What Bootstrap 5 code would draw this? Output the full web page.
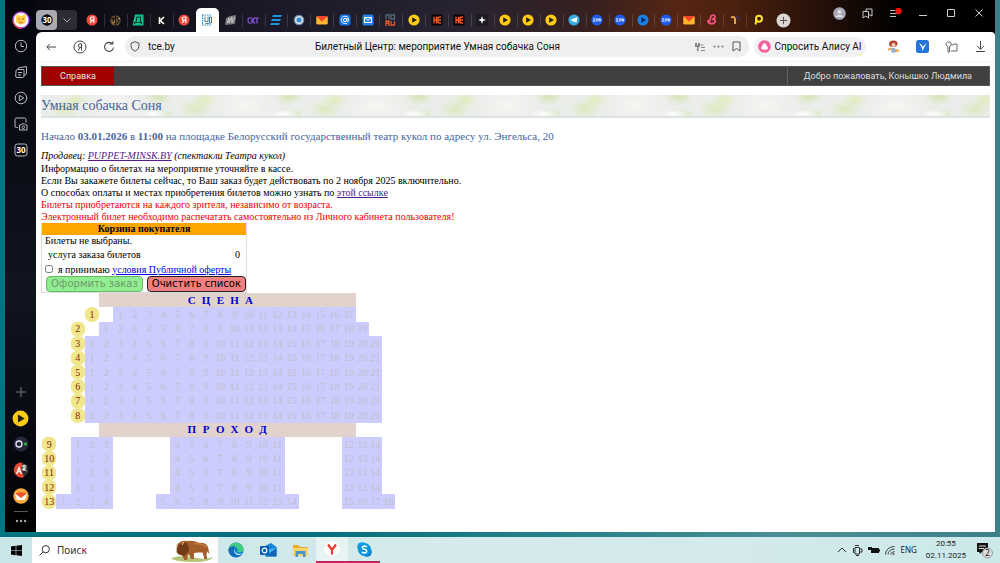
<!DOCTYPE html>
<html lang="ru">
<head>
<meta charset="utf-8">
<meta name="viewport" content="width=device-width, initial-scale=1">
<title>Билетный Центр: мероприятие Умная собачка Соня</title>
<link rel="stylesheet" href="https://cdn.jsdelivr.net/npm/bootstrap@5.3.0/dist/css/bootstrap.min.css">
<style>
body{background:linear-gradient(90deg,#007480,#02707c 30%,#4b8f95 80%,#3b8088);font-family:"Noto Sans",sans-serif;font-size:10px;line-height:12px;color:#111}
button{font:inherit}
svg{display:block;flex:none}
.desk{padding:0 5px 5px}
.side{width:31px;background:linear-gradient(#05060d,#10141f 55%,#070910 85%,#000);padding-top:7px;padding-bottom:4px}
.side button,.tb button,.tool button,.task button{border:0;background:none;padding:0;display:flex;align-items:center;justify-content:center;color:inherit;flex:none}
.side button{height:26px;width:31px;color:#b9bcc4}
.side .more{height:14px}
.side hr{width:14px;margin:2px auto 2px;color:#aaa;opacity:.5}
.frame{background:linear-gradient(90deg,#080912,#1c1a28 25%,#282330 45%,#37201f 58%,#572613 67%,#4a200f 73%,#1b0c06 84%,#000 90%) top/100% 40px no-repeat}
.tb{height:32px;color:#c9c9c9}
.grp{height:20px;margin-top:10px;width:41px;border-radius:4px;background:#2b2c34;overflow:hidden;margin-right:4px;flex:none}
.grp button:first-child{width:21px;background:#aaabb0;border-radius:4px}
.grp button:last-child{width:20px}
.tabs button{flex:1 1 0;height:22px;margin-top:9px;position:relative}
.tabs button+button:before{content:"";position:absolute;left:0;top:5px;height:13px;border-left:1px solid #ffffff22}
.tabs .on{background:#fff;border-radius:5px 5px 0 0;height:24px;margin-top:8px}
.tabs .on:before,.tabs .on+button:before{display:none}
.add{width:28px;height:22px;margin:9px 28px 0 0}
.win{padding-right:2px}
.win button{width:28px;height:26px}
.view{background:#fff;border-radius:6px 4px 0 0}
.tool{height:30px;color:#444;border-bottom:1px solid #f4f4f4;font-family:Roboto,"Noto Sans",sans-serif}
.tool>button{width:29px;height:28px}
.addr{height:21px;background:#efefef;border-radius:10px;color:#111;padding:0 4px 0 5px;margin:0 5px 0 2px}
.addr input{border:0;background:none;padding:0;width:36px;color:#111;outline:0}
.addr button{width:18px}
.tool .alice{height:20px;width:112px;border-radius:10px;background:#f1f0f2;color:#111;gap:3px;margin-right:13px}
.site{font-family:"Liberation Serif",serif;font-size:10px;color:#000;padding:4px 5px 20px}
.menu{background:#404040;border:1px solid #555;height:20px;font-family:Roboto,"Noto Sans",sans-serif;font-size:9px;color:#ddd}
.menu a{color:#e6e6e6;background:#a00000;width:72px}
.menu span{border-left:1px solid #606060;padding:0 17px 0 16px}
.banner{margin:9px 0 0;height:23px;line-height:22px;font-size:14px;font-weight:400;color:#46649b;border-bottom:2px solid #dde3e3;
background:radial-gradient(ellipse 14px 4px at 113px 19px,#fff,transparent),radial-gradient(ellipse 16px 10px at 24px 14px,#dce9be,transparent),radial-gradient(ellipse 14px 8px at 118px 2px,#d6e4b4,transparent),radial-gradient(ellipse 20px 8px at 128px 20px,#dfebcd,transparent),radial-gradient(ellipse 12px 8px at 34px 5px,#e2ecbc,transparent),radial-gradient(ellipse 34px 22px at 75px 10px,#f5f5f3,transparent),#ebedea;background-size:130px 23px}
.start{margin:10px 0 5px;font-size:11px;line-height:16px;font-weight:400;color:#46649b}
.site p{margin:0;line-height:12px}
.site p.org{line-height:13px}
.red{color:#e00}
.site a.vis{color:#551a8b}
.site a.lnk{color:#00e}
.cart{width:206px;border:1px solid #ddd;border-top:0}
.cart h2{background:orange;font-size:10px;line-height:12px;font-weight:700;margin:0;text-align:center}
.cart p{padding:0 3px}
.cart .fee{line-height:16px;padding:0 6px}
.cart input{width:8px;height:8px;margin:0 5px 2px 3px}
.cart .row3{height:13px;white-space:nowrap}
.cart button{font:10px/12px "DejaVu Sans",sans-serif;height:16px;padding:0 4px;border-radius:4px;flex:none}
.order{background:#90ee90;border:1px solid #67b767;color:#6f9a6f}
.clear{background:#f08080;border:1px solid #222;color:#000}
.hall{table-layout:fixed;width:353px;height:216px;margin-left:1px;border-collapse:collapse;text-align:center;font-size:10px;line-height:13px}
.hall td{padding:0;height:14px;font-weight:400;white-space:nowrap}
.hall col.slim{width:13px}
.hall .seat{background:#ccf;color:#bfc0c8}
.hall .bar{background:#e1d3cc;color:#00c;font-weight:700;font-size:11px}
.hall .num{color:#8b2500;background:radial-gradient(circle at center,#f0e68c 6px,#f0e68c 7px,transparent 8px)}
.task{height:26px;background:linear-gradient(90deg,#c9e5e7,#d4eaeb 40%,#d3e9eb 75%,#cce9ea);color:#222;font-size:8px;line-height:12px}
.task .go{width:32px;height:26px}
.find{width:186px;background:#fff;height:26px;padding:0 4px 0 7px;gap:7px}
.find input{border:0;padding:0;width:90px;outline:0;font-size:10px;background:none;color:#333}
.find input::placeholder{color:#333;opacity:1}
.apps{padding-left:2px}
.apps button{width:32px;height:26px}
.apps .run{border-bottom:2px solid #c2255c}
.apps .cur{background:#e8f3f4}
.tray{gap:4px;padding-right:7px}
.tray time{font-family:Roboto,"Noto Sans",sans-serif;text-align:center;margin:0 6px 0 5px}
</style>
</head>
<body class="min-vh-100 d-flex flex-column">
<svg width="0" height="0" class="position-absolute" aria-hidden="true"><defs>
<symbol id="ya" viewBox="0 0 12 12"><circle cx="6" cy="6" r="5.5" fill="#f0483c"/><path d="M7.8 9V3H6.2Q4.3 3 4.3 4.7T6.2 6.4H7.8M6 6.4 4.3 9" fill="none" stroke="#fff" stroke-width="1.2"/></symbol>
<symbol id="pl" viewBox="0 0 12 12"><circle cx="6" cy="6" r="5.6" fill="#fc1"/><path d="M4.2 3.2 9 6 4.2 8.8z" fill="#221c20"/></symbol>
<symbol id="zm" viewBox="0 0 12 12"><circle cx="6" cy="6" r="5.6" fill="#1e5be6"/><path d="M2 4.8H4.3L2 7.2H4.6M5.6 7.5V5H7V7.5M7 5H9.6V7.5M8.4 5V7.5" fill="none" stroke="#dce8ff" stroke-width=".9"/></symbol>
<symbol id="ml" viewBox="0 0 12 12"><rect x=".5" y="2" width="11" height="8.5" rx="1" fill="#ffac1c"/><path d="M.5 2H11.5L6 7.8z" fill="#f1442c"/><path d="M.5 3 6 8 11.5 3V10H.5z" fill="#ffb52e"/></symbol>
<symbol id="he" viewBox="0 0 12 12"><rect x=".5" y=".5" width="11" height="11" rx="1" fill="#0b0707"/><path d="M3 2.7V9.4M3 6H5.5M5.5 2.7V9.4M7 3.5 10 2.8M7 6H10M7 8.5 10 9.3M7 3V9" fill="none" stroke="#f26522" stroke-width="1.3"/></symbol>
</defs></svg>

<div class="desk flex-grow-1 d-flex">
<nav class="side d-flex flex-column" aria-label="Боковая панель">
<button aria-label="Профиль"><svg width="18" height="18" viewBox="0 0 18 18"><circle cx="9" cy="9" r="8" fill="#fff" stroke="#a943d8" stroke-width="1.3"/><path d="M1 9A8 8 0 0 0 9 17" stroke="#e84b5b" fill="none" stroke-width="1.4"/><path d="M4 6 5 3 8 5H10L13 3 14 6V11Q9 16 4 11z" fill="#ffd147"/><circle cx="7" cy="8" r=".8" fill="#963"/><circle cx="11" cy="8" r=".8" fill="#963"/><path d="M7 11Q9 13 11 11" stroke="#d55" fill="none"/></svg></button>
<button aria-label="История"><svg width="14" height="14" viewBox="0 0 14 14" fill="none" stroke="currentColor"><circle cx="7" cy="7" r="5.7"/><path d="M7 3.5V7.5H10"/></svg></button>
<button aria-label="Вкладки"><svg width="14" height="14" viewBox="0 0 14 14" fill="none" stroke="currentColor"><path d="M2 6Q2 4.5 3.5 4.5H9Q10 4.5 10 5.5V11Q10 12.5 8.5 12.5H3Q1.5 12.5 1.7 11zM4 4 4.5 2.8 12.5 1.5V9L10 10.5M4 7.5H8M4 10H7"/></svg></button>
<button aria-label="Видео"><svg width="14" height="14" viewBox="0 0 14 14" fill="none" stroke="currentColor"><circle cx="7" cy="7" r="5.8"/><path d="M5.3 4.3 9.8 7 5.3 9.7z"/></svg></button>
<button aria-label="Скриншот"><svg width="14" height="14" viewBox="0 0 14 14" fill="none" stroke="currentColor"><path d="M4 10.5H2.5Q1 10.5 1 9V2.5Q1 1 2.500 1H10.500Q12 1 12 2.500V5.500M5.500 8H7L8 6.800H10.500L11.500 8H13V13H5.500z"/><circle cx="9.300" cy="10.300" r="1.300"/></svg></button>
<button aria-label="Счётчик"><svg width="14" height="14" viewBox="0 0 14 14"><rect x="1" y="1" width="12" height="12" rx="2.500" fill="none" stroke="currentColor"/><text x="7" y="10" text-anchor="middle" font-size="8" font-weight="700" fill="#fff">30</text></svg></button>
<button class="mt-auto" aria-label="Добавить"><svg width="12" height="12" viewBox="0 0 12 12" stroke="#777b85"><path d="M6 1V11M1 6H11"/></svg></button>
<button aria-label="Музыка"><svg width="17" height="17"><use href="#pl"/></svg></button>
<button aria-label="Алиса"><svg width="16" height="16" viewBox="0 0 16 16"><circle cx="8" cy="8" r="7.500" fill="#24283a"/><circle cx="6" cy="8" r="3" fill="none" stroke="#e8e9f3" stroke-width="1.300"/><circle cx="12.500" cy="8" r="1.400" fill="#2ecc40"/></svg></button>
<button aria-label="Переводчик"><svg width="16" height="16" viewBox="0 0 16 16"><circle cx="8" cy="8" r="7.500" fill="#2a2a2a"/><path d="M9 .500A7.500 7.500 0 1 0 11 15L8.500 8z" fill="#f0442f"/><path d="M3.500 12 6 5.500 8.500 12M4.500 9.700H7.500" fill="none" stroke="#fff" stroke-width="1.300"/><path d="M8.500 4H13.500M11 2.500V9M9 8Q13 7 13 5M9.500 6 13.500 9" fill="none" stroke="#fff"/></svg></button>
<button aria-label="Почта"><svg width="16" height="16" viewBox="0 0 16 16"><circle cx="8" cy="8" r="7.700" fill="#fdab3d"/><path d="M2 5.500H14L12 12H4z" fill="#fff"/><path d="M2 5.500Q8 2.500 14 5.500L8 10z" fill="#f2552c"/></svg></button>
<hr>
<button class="more" aria-label="Ещё"><svg width="12" height="4" fill="#aaa"><circle cx="2" cy="2" r="1.200"/><circle cx="6" cy="2" r="1.200"/><circle cx="10" cy="2" r="1.200"/></svg></button>
</nav>

<div class="frame flex-grow-1 d-flex flex-column">
<header class="tb d-flex">
<div class="grp d-flex"><button aria-label="Группа"><svg width="12" height="12" viewBox="0 0 12 12"><circle cx="6" cy="6" r="5.700" fill="#0b0b0b"/><text x="6" y="9" text-anchor="middle" font-size="8" font-weight="700" fill="#fff">30</text></svg></button><button aria-label="Список"><svg width="8" height="5" viewBox="0 0 8 5" fill="none" stroke="#aaa"><path d="M.500 .500 4 4 7.500 .500"/></svg></button></div>
<div class="tabs d-flex flex-grow-1">
<button aria-label="Яндекс"><svg width="12" height="12"><use href="#ya"/></svg></button>
<button aria-label="Сайт"><svg width="11" height="11" viewBox="0 0 11 11"><circle cx="5.500" cy="5.500" r="5.200" fill="#6d5236"/><path d="M5.500 0V11M1 4 4 3 3 7M7 2 9 6 7 9" stroke="#1a1510" fill="none" stroke-width="1.200"/><path d="M2 8 5 6M8 4 10 3" stroke="#d39a4a"/></svg></button>
<button aria-label="Дзен"><svg width="12" height="12" viewBox="0 0 12 12"><path d="M3 .500H11.500V11.500H.500z" fill="#10c28e"/><path d="M2.500 10V8.500H9.500V10M4 8.500 5 3H8.500V8.500" fill="none" stroke="#063b2c" stroke-width="1.200"/></svg></button>
<button aria-label="К"><svg width="11" height="11" viewBox="0 0 11 11"><rect width="11" height="11" rx="2" fill="#121212"/><path d="M3.500 2V9M8 2 4.300 5.500 8 9" fill="none" stroke="#fff" stroke-width="1.600"/></svg></button>
<button aria-label="Яндекс"><svg width="12" height="12"><use href="#ya"/></svg></button>
<button class="on" aria-label="Билетный Центр"><svg width="12" height="12" viewBox="0 0 12 12" fill="none" stroke="#2583b5"><path d="M1 1H11M1 11H11M1.500 1V11" stroke-dasharray="1.500 1"/><path d="M4 2.500V7.500H7V2.500M8.500 3H10.500V9H8.500zM4.500 9.500H8"/></svg></button>
<button aria-label="Сайт"><svg width="11" height="10" viewBox="0 0 11 10"><path d="M1 3 5 1 11 0 10 9 0 10z" fill="#777"/><path d="M2 8 4 3V8L7 2V8L10 2" stroke="#ccc" fill="none"/></svg></button>
<button aria-label="СКТ"><svg width="12" height="9" viewBox="0 0 12 9" fill="none" stroke="#8757d9" stroke-width="1.200"><path d="M4 2Q1 1 1 4.500T4 7M5 1.500V7.500M8 1.500 5.500 4.500 8 7.500M8 2H12M10 2V7.500"/></svg></button>
<button aria-label="Сайт"><svg width="12" height="10" viewBox="0 0 12 10"><path d="M3 0H12L11 2H2zM2 4H11L10 6H1zM1 8H10L9 10H0z" fill="#1d93dc"/></svg></button>
<button aria-label="Сайт"><svg width="12" height="12" viewBox="0 0 12 12"><circle cx="6" cy="6" r="4.700" fill="#d9e5ee" stroke="#668ca8" stroke-width="1.200"/><circle cx="6" cy="6" r="2.500" fill="#3488cc"/></svg></button>
<button aria-label="Почта"><svg width="12" height="12"><use href="#ml"/></svg></button>
<button aria-label="Mail"><svg width="12" height="12" viewBox="0 0 12 12"><rect x=".500" y=".500" width="11" height="11" rx="2.500" fill="#1671e8"/><path d="M8 4V6.500Q8 8 9.300 7.300 10.500 2.500 6 2.200 2 2.500 2.200 6.300 3 10.300 8 9.300" fill="none" stroke="#fff" stroke-width=".9"/><circle cx="6" cy="6" r="1.600" fill="none" stroke="#fff"/></svg></button>
<button aria-label="Письма"><svg width="12" height="12" viewBox="0 0 12 12"><rect x=".500" y=".500" width="11" height="11" rx="2" fill="#2580ee"/><path d="M2.500 3.500H9.500V8.500H2.500zM2.500 3.500 6 6.300 9.500 3.500" fill="none" stroke="#fff"/></svg></button>
<button aria-label="RU"><svg width="11" height="12" viewBox="0 0 11 12" fill="none" stroke-width="1.300"><path d="M1 5V1H4V5M6 1H9.500V5H6z" stroke="#536879"/><path d="M1 12V7H4V9H1M3 9 4.500 12M6 7V11H9.500V7" stroke="#e4592d"/></svg></button>
<button aria-label="Видео"><svg width="12" height="12"><use href="#pl"/></svg></button>
<button aria-label="НЕ"><svg width="12" height="12"><use href="#he"/></svg></button>
<button aria-label="НЕ"><svg width="12" height="12"><use href="#he"/></svg></button>
<button aria-label="Звезда"><svg width="12" height="12" viewBox="0 0 12 12"><rect width="12" height="12" rx="2" fill="#1b1a20"/><path d="M6 2 7 5 10 6 7 7 6 10 5 7 2 6 5 5z" fill="#fff"/></svg></button>
<button aria-label="Видео"><svg width="12" height="12"><use href="#pl"/></svg></button>
<button aria-label="Видео"><svg width="12" height="12"><use href="#pl"/></svg></button>
<button aria-label="Видео"><svg width="12" height="12"><use href="#pl"/></svg></button>
<button aria-label="Telegram"><svg width="12" height="12" viewBox="0 0 12 12"><circle cx="6" cy="6" r="5.600" fill="#34a9e0"/><path d="M2 6 9.500 3 8.300 9 5.500 7.300 5 8.500 4.300 6.700z" fill="#fff"/></svg></button>
<button aria-label="zm"><svg width="12" height="12"><use href="#zm"/></svg></button>
<button aria-label="zm"><svg width="12" height="12"><use href="#zm"/></svg></button>
<button aria-label="Плеер"><svg width="12" height="12" viewBox="0 0 12 12"><circle cx="6" cy="6" r="5.600" fill="#1780e6"/><path d="M4.300 3 9 6 4.300 9z" fill="#092c67"/></svg></button>
<button aria-label="zm"><svg width="12" height="12"><use href="#zm"/></svg></button>
<button aria-label="Почта"><svg width="12" height="12"><use href="#ml"/></svg></button>
<button aria-label="B"><svg width="12" height="12" viewBox="0 0 12 12"><path d="M3 10 5 2Q9 0 9 3 9 5 6 5.300 10 5 9 8 7 11 3 9 1 7 3 6" fill="none" stroke="#f0517e" stroke-width="1.800"/></svg></button>
<button aria-label="Сайт"><svg width="12" height="12" viewBox="0 0 12 12" fill="none" stroke-width="2"><path d="M2 3.500Q6 2 6 5V10" stroke="#e7a24a"/><path d="M6.500 2.500Q10 3 10 6" stroke="#35315b"/></svg></button>
<button aria-label="P"><svg width="12" height="12" viewBox="0 0 12 12"><circle cx="7" cy="4.800" r="3" fill="none" stroke="#ffe02d" stroke-width="2"/><path d="M4.500 5 3.500 10.500" stroke="#ffe02d" stroke-width="2"/></svg></button>
</div>
<button class="add" aria-label="Новая вкладка"><svg width="15" height="15" viewBox="0 0 15 15"><circle cx="7.500" cy="7.500" r="7" fill="#ddd6d3"/><path d="M7.500 3.800V11.200M3.800 7.500H11.200" stroke="#555"/></svg></button>
<div class="win d-flex">
<button aria-label="Пользователь"><svg width="13" height="13" viewBox="0 0 13 13"><circle cx="6.500" cy="6.500" r="6.300" fill="#a9a8b5"/><circle cx="6.500" cy="4.800" r="1.900" fill="#e4e3ec"/><path d="M2.500 10Q6.500 5.500 10.500 10" fill="#e4e3ec"/></svg></button>
<button aria-label="Коллекции"><svg width="11" height="11" viewBox="0 0 11 11" fill="none" stroke="currentColor"><path d="M1 3.500H6.500V10L3.800 8 1 10zM4 3V1H10V8L7 6.500"/></svg></button>
<button aria-label="Меню"><svg width="13" height="12" viewBox="0 0 13 12"><path d="M1 3.500H6M1 6.500H8M1 9.500H7" stroke="#bbb"/><circle cx="9.500" cy="4" r="3.200" fill="#f5140c"/></svg></button>
<button aria-label="Свернуть"><svg width="8" height="8" viewBox="0 0 8 8" stroke="#ccc"><path d="M0 6.500H8"/></svg></button>
<button aria-label="Развернуть"><svg width="8" height="8" viewBox="0 0 8 8" fill="none" stroke="#ccc"><path d="M.500 .500H7.500V7.500H.500z"/></svg></button>
<button aria-label="Закрыть"><svg width="8" height="8" viewBox="0 0 8 8" stroke="#ccc"><path d="M.500 .500 7.500 7.500M7.500 .500 .500 7.500"/></svg></button>
</div>
</header>

<div class="view flex-grow-1">
<div class="tool d-flex align-items-center">
<button aria-label="Назад"><svg width="10" height="8" viewBox="0 0 10 8" fill="none" stroke="currentColor"><path d="M10 4H1M4 .800 .800 4 4 7.200"/></svg></button>
<button aria-label="Яндекс"><svg width="14" height="14" viewBox="0 0 14 14" fill="none" stroke="currentColor"><circle cx="7" cy="7" r="6"/><path d="M8.500 10.500V3.800H7Q5.300 3.800 5.300 5.600T7 7.300H8.500M7 7.300 5.300 10.500"/></svg></button>
<button aria-label="Обновить"><svg width="12" height="12" viewBox="0 0 12 12" fill="none" stroke="currentColor" stroke-width="1.100"><path d="M9.500 3A4.500 4.500 0 1 0 10.500 6.500M6.500 3H9.800V.300"/></svg></button>
<div class="addr flex-grow-1 d-flex align-items-center">
<svg width="10" height="11" viewBox="0 0 10 11" fill="none" stroke="#555" class="me-2"><path d="M5 .700 9 2.300V5Q9 8.500 5 10.300 1 8.500 1 5V2.300z"/></svg>
<input aria-label="Адрес" value="tce.by">
<span class="flex-grow-1 text-center">Билетный Центр: мероприятие Умная собачка Соня</span>
<button aria-label="Перевод"><svg width="10" height="10" viewBox="0 0 10 10"><path d="M0 1H2V3H3V1H5V5H3.500V9H2V5H0z" fill="#888"/><path d="M5.500 3H8.500M6 5.500H10M6 8.500H10" stroke="#888" stroke-width="1.200"/></svg></button>
<button aria-label="Ещё"><svg width="11" height="3" fill="#777"><circle cx="1.500" cy="1.500" r="1"/><circle cx="5.500" cy="1.500" r="1"/><circle cx="9.500" cy="1.500" r="1"/></svg></button>
<button aria-label="Закладка"><svg width="9" height="11" viewBox="0 0 9 11" fill="none" stroke="#555"><path d="M1 1H8V10L4.500 7.500 1 10z"/></svg></button>
</div>
<button class="alice"><svg width="13" height="13" viewBox="0 0 13 13"><circle cx="6.500" cy="6.500" r="6.300" fill="#f2609d"/><path d="M6.500 3Q7.500 3 10 8 10 9.700 6.500 9.700T3 8Q5.500 3 6.500 3z" fill="#fff"/></svg>Спросить Алису AI</button>
<button aria-label="Расширение"><svg width="13" height="14" viewBox="0 0 13 14"><path d="M2 4Q2 .500 6.500 .500T10.500 4Q10 7 6 7T2 4" fill="#b5462e"/><circle cx="6.500" cy="5" r="2" fill="#f2ceb0"/><path d="M3 8H8L10 12 5 13z" fill="#9ab2ce"/><path d="M1 10 4 8M9 10 12 11" stroke="#e9a73c" stroke-width="2"/></svg></button>
<button aria-label="Расширение"><svg width="13" height="13" viewBox="0 0 13 13"><rect width="13" height="13" rx="2.500" fill="#2475d6"/><path d="M3 3 6 5 6.500 7 10.500 3 8 8 6 11 6 8z" fill="#fff"/></svg></button>
<button aria-label="Пароли"><svg width="13" height="12" viewBox="0 0 13 12" fill="none" stroke="#666"><path d="M3 11V6Q.500 4.500 1 2.500 2 .500 5 1 7 2 6 4L4.500 6V11zM6.500 4H8L9 3H12V10H6"/></svg></button>
<button aria-label="Загрузки"><svg width="9" height="11" viewBox="0 0 9 11" fill="none" stroke="currentColor"><path d="M4.500 0V8M1 4.800 4.500 8.300 8 4.800M0 10.500H9"/></svg></button>
</div>

<main class="site">
<nav class="menu d-flex justify-content-between align-items-stretch"><a href="#" class="d-flex align-items-center justify-content-center text-decoration-none">Справка</a><span class="d-flex align-items-center">Добро пожаловать, Конышко Людмила</span></nav>
<h1 class="banner">Умная собачка Соня</h1>
<h2 class="start">Начало <b>03.01.2026</b> в <b>11:00</b> на площадке Белорусский государственный театр кукол по адресу ул. Энгельса, 20</h2>
<p class="org fst-italic">Продавец: <a href="#" class="vis">PUPPET-MINSK.BY</a> (спектакли Театра кукол)</p>
<p class="org">Информацию о билетах на мероприятие уточняйте в кассе.</p>
<p>Если Вы закажете билеты сейчас, то Ваш заказ будет действовать по 2 ноября 2025 включительно.</p>
<p>О способах оплаты и местах приобретения билетов можно узнать по <a href="#" class="vis">этой ссылке</a></p>
<p class="red">Билеты приобретаются на каждого зрителя, независимо от возраста.</p>
<p class="red">Электронный билет необходимо распечатать самостоятельно из Личного кабинета пользователя!</p>
<form class="cart" onsubmit="return false">
<h2>Корзина покупателя</h2>
<p>Билеты не выбраны.</p>
<div class="fee d-flex justify-content-between align-items-center"><span>услуга заказа билетов</span><span>0</span></div>
<div class="row3 d-flex align-items-center"><input type="checkbox" id="agree"><label for="agree">я принимаю <a href="#" class="lnk">условия Публичной оферты</a></label></div>
<div class="d-flex justify-content-between ps-1"><button class="order" disabled>Оформить заказ</button><button class="clear">Очистить список</button></div>
</form>
<table class="hall" aria-label="Схема зала"><colgroup><col span="22"><col span="3" class="slim"></colgroup><tbody id="hall"></tbody></table>
</main>
</div>
</div>
</div>

<footer class="task d-flex align-items-center">
<button class="go" aria-label="Пуск"><svg width="11" height="11" viewBox="0 0 11 11"><path d="M0 1.500 4.700 .800V5.200H0zM5.300 .700 11 0V5.200H5.300zM0 5.800H4.700V10.200L0 9.500zM5.300 5.800H11V11L5.300 10.300z" fill="#000"/></svg></button>
<label class="find d-flex align-items-center"><svg width="11" height="11" viewBox="0 0 11 11" fill="none" stroke="#333"><circle cx="6.800" cy="4.200" r="3.600"/><path d="M4.200 6.800 .500 10.500"/></svg><input placeholder="Поиск" aria-label="Поиск">
<svg width="44" height="25" viewBox="0 0 46 26" class="ms-auto"><path d="M1 21Q12 17 24 20T45 20Q42 25 24 25T1 21" fill="#b5c47a"/><path d="M7 8Q10 2 18 3 25 2 30 5 38 4 40 10L41 17 39 14 38 17 39 22H36L34 15 28 15 25 16V22H22L20 17 18 19V23H15L13 18 9 17Q6 15 7 12z" fill="#a35e2b"/><path d="M8 8Q12 4 18 5L20 13 15 19 9 17Q6 14 8 8" fill="#743c16"/><path d="M8 9 6 6M13 7 14 4" stroke="#eee0bd"/><path d="M25 6Q34 5 38 10" stroke="#c0763c" fill="none" stroke-width="2"/></svg></label>
<div class="apps d-flex">
<button aria-label="Edge"><svg width="16" height="16" viewBox="0 0 16 16"><circle cx="8" cy="8" r="7.600" fill="#1480d0"/><path d="M.500 7Q2 .400 8.500 .400 15 1 15.600 7 15 11 10.500 10.500 8.500 10 10 8 9 4.500 5 5 2 5.500 .500 7" fill="#42cb82"/><path d="M.500 7Q3 3.500 7 4 4 8 6.500 12 9 15 13 13 9 17 4 14 .500 12 .500 7" fill="#116bb9"/><path d="M7 7Q6 12 12 12L14.500 11Q12 14 8.500 12.500 5 10 7 7" fill="#d6f0f1"/></svg></button>
<button aria-label="Outlook"><svg width="17" height="14" viewBox="0 0 17 14"><path d="M5 3 11 0 16.500 4V13H5z" fill="#1684d8"/><path d="M5 7 16.500 5V13.500H5z" fill="#44b9ef"/><path d="M16.500 5 5 13.500H16.500z" fill="#1365b5"/><rect y="3" width="9" height="9" rx="1" fill="#0b5fb3"/><circle cx="4.500" cy="7.500" r="2.300" fill="none" stroke="#fff" stroke-width="1.200"/></svg></button>
<button aria-label="Проводник"><svg width="15" height="13" viewBox="0 0 15 13"><path d="M0 1H5L7 3H15V12H0z" fill="#e8a92f"/><path d="M0 4H15V12H0z" fill="#fdd36b"/><path d="M2.500 13V7H12.500V13H10V10H5V13z" fill="#4795c9"/></svg></button>
<button class="run cur" aria-label="Яндекс Браузер"><svg width="16" height="16" viewBox="0 0 16 16"><circle cx="8" cy="8" r="7.800" fill="#fff"/><path d="M4 3.500 8 9 12 3.500M8 8.500V13.500" fill="none" stroke="#f0362a" stroke-width="2.200"/></svg></button>
<button class="run" aria-label="Skype"><svg width="15" height="15" viewBox="0 0 15 15"><circle cx="5" cy="5" r="4.800" fill="#0ba4e6"/><circle cx="10" cy="10" r="4.800" fill="#0878cf"/><circle cx="7.500" cy="7.500" r="6.500" fill="#0a97df"/><path d="M10 5Q7.500 3 5.500 4.700 4.800 6.700 7.500 7.300T9.500 10Q7.500 12 5 10" fill="none" stroke="#fff" stroke-width="1.500"/></svg></button>
</div>
<div class="tray ms-auto d-flex align-items-center">
<svg width="12" height="8" viewBox="0 0 12 8" fill="none" stroke="#333"><path d="M2 6 6 2 10 6"/></svg>
<svg width="12" height="12" viewBox="0 0 12 12" fill="none" stroke="#333"><path d="M3 3.500H7.500V10H3zM7.500 5H10V8H7.500M3 1.500H7M4 11.500H7M1.500 4V9"/></svg>
<svg width="12" height="10" viewBox="0 0 12 10"><path d="M3 3H11V4.500H12V6.500H11V8H3zM0 2H4V5H0z" fill="#111"/></svg>
<svg width="12" height="11" viewBox="0 0 12 11" fill="none" stroke="#444"><path d="M1.500 9.500Q2 2 10.500 1.500M4 9.500Q4.500 4.500 10.500 4M6.500 9.500Q7 7 10.500 6.500"/><circle cx="9.500" cy="9" r=".700"/></svg>
<span>ENG</span>
<time datetime="2025-11-02T20:55">20:55<br>02.11.2025</time>
<button aria-label="Уведомления"><svg width="17" height="18" viewBox="0 0 17 18"><path d="M1 2H12V11H6L3.500 13V11H1z" fill="#111"/><path d="M3 5H10M3 7.500H8" stroke="#ddd"/><circle cx="11.500" cy="12" r="5" fill="#ddd" stroke="#999"/><text x="11.500" y="15" text-anchor="middle" font-size="8" fill="#111">2</text></svg></button>
</div>
</footer>
<script>
// Each row: label, column of the label, then blocks of [first column, number of seats].
const wide = n => [n, 2, [3, 21]];
const split = n => [n, 0, [2, 3], [9, 8], [21, 3]];
const plan = ['СЦЕНА', [1, 3, [5, 17]], [2, 2, [4, 19]], ...[3, 4, 5, 6, 7, 8].map(wide), 'ПРОХОД',
  ...[9, 10, 11, 12].map(split), [13, 0, [1, 4], [8, 10], [21, 4]]];
const body = document.getElementById('hall');
for (const r of plan) {
  const tr = body.insertRow();
  const cells = Array.from({length: 25}, () => tr.insertCell());
  if (typeof r === 'string') {
    for (let c = 4; c < 22; c++) { cells[c].className = 'bar'; cells[c].textContent = r[c - 10] || ''; }
    continue;
  }
  const [label, at, ...blocks] = r;
  cells[at].className = 'num';
  cells[at].textContent = label;
  let seat = 1;
  for (const [from, count] of blocks)
    for (let c = from; c < from + count; c++) { cells[c].className = 'seat'; cells[c].textContent = seat++; }
}
</script>
<script src="https://cdn.jsdelivr.net/npm/bootstrap@5.3.0/dist/js/bootstrap.bundle.min.js"></script>
</body>
</html>
